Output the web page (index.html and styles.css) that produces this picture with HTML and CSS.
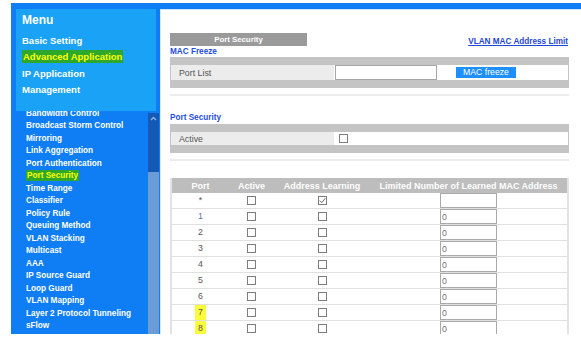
FILE: index.html
```html
<!DOCTYPE html>
<html lang="en">
<head>
  <meta charset="UTF-8">
  <title>Port Security</title>
  <link rel="stylesheet" href="styles.css">
</head>
<body>
  <div class="app">
    <div class="topbar"></div>
    <div class="frame">

      <!-- left navigation -->
      <aside class="sidebar">
        <nav class="menu">
          <div class="menu-title">Menu</div>
          <div class="menu-item">Basic Setting</div>
          <div class="menu-item"><span class="hl">Advanced Application</span></div>
          <div class="menu-item">IP Application</div>
          <div class="menu-item">Management</div>
        </nav>
        <div class="submenu">
          <ul class="sublist">
            <li>Bandwidth Control</li>
            <li>Broadcast Storm Control</li>
            <li>Mirroring</li>
            <li>Link Aggregation</li>
            <li>Port Authentication</li>
            <li><span class="hl">Port Security</span></li>
            <li>Time Range</li>
            <li>Classifier</li>
            <li>Policy Rule</li>
            <li>Queuing Method</li>
            <li>VLAN Stacking</li>
            <li>Multicast</li>
            <li>AAA</li>
            <li>IP Source Guard</li>
            <li>Loop Guard</li>
            <li>VLAN Mapping</li>
            <li>Layer 2 Protocol Tunneling</li>
            <li>sFlow</li>
          </ul>
          <div class="scrollbar">
            <div class="scroll-track">
              <svg width="7" height="5" viewBox="0 0 7 5"><polyline points="1,4 3.5,1.5 6,4" fill="none" stroke="#8db3e2" stroke-width="1.4"/></svg>
            </div>
            <div class="scroll-thumb"></div>
          </div>
        </div>
      </aside>

      <main class="content">
        <div class="head-row">
          <div class="tab">Port Security</div>
          <a class="link">VLAN MAC Address Limit</a>
        </div>

        <div class="section-title first">MAC Freeze</div>
        <div class="panel">
          <div class="panel-row tall">
            <div class="label">Port List</div>
            <div class="value">
              <input class="text-input" type="text">
              <button class="btn">MAC freeze</button>
            </div>
          </div>
        </div>
        <div class="sep"></div>

        <div class="section-title">Port Security</div>
        <div class="panel">
          <div class="panel-row">
            <div class="label">Active</div>
            <div class="value pad"><span class="cb"></span></div>
          </div>
        </div>
        <div class="sep"></div>

        <table class="ports">
          <thead>
            <tr>
              <th class="c-port">Port</th>
              <th class="c-active">Active</th>
              <th class="c-learn">Address Learning</th>
              <th>Limited Number of Learned MAC Address</th>
            </tr>
          </thead>
          <tbody>
            <tr>
              <td>*</td>
              <td><span class="cb"></span></td>
              <td><span class="cb"><svg width="7" height="7" viewBox="0 0 7 7"><polyline points="0.8,3.6 2.8,5.6 6.3,1.2" fill="none" stroke="#666" stroke-width="1"/></svg></span></td>
              <td><input class="num" type="text" value=""></td>
            </tr>
            <tr>
              <td class="first-port">1</td>
              <td><span class="cb"></span></td>
              <td><span class="cb"></span></td>
              <td><input class="num" type="text" value="0"></td>
            </tr>
            <tr>
              <td>2</td>
              <td><span class="cb"></span></td>
              <td><span class="cb"></span></td>
              <td><input class="num" type="text" value="0"></td>
            </tr>
            <tr>
              <td>3</td>
              <td><span class="cb"></span></td>
              <td><span class="cb"></span></td>
              <td><input class="num" type="text" value="0"></td>
            </tr>
            <tr>
              <td>4</td>
              <td><span class="cb"></span></td>
              <td><span class="cb"></span></td>
              <td><input class="num" type="text" value="0"></td>
            </tr>
            <tr>
              <td>5</td>
              <td><span class="cb"></span></td>
              <td><span class="cb"></span></td>
              <td><input class="num" type="text" value="0"></td>
            </tr>
            <tr>
              <td>6</td>
              <td><span class="cb"></span></td>
              <td><span class="cb"></span></td>
              <td><input class="num" type="text" value="0"></td>
            </tr>
            <tr>
              <td><span class="mark">7</span></td>
              <td><span class="cb"></span></td>
              <td><span class="cb"></span></td>
              <td><input class="num" type="text" value="0"></td>
            </tr>
            <tr>
              <td><span class="mark">8</span></td>
              <td><span class="cb"></span></td>
              <td><span class="cb"></span></td>
              <td><input class="num" type="text" value="0"></td>
            </tr>
          </tbody>
        </table>
      </main>
    </div>
  </div>
</body>
</html>
```

FILE: styles.css
```css
* { box-sizing: border-box; margin: 0; padding: 0; }

body {
  font-family: 'Liberation Sans', Arial, sans-serif;
  background: white;
}

.app {
  margin: 3px 0 0 11px;
  height: 331px;
  display: flex;
  flex-direction: column;
  overflow: hidden;
  background: #0f7ef4;
}

.topbar {
  height: 6px;
  flex: none;
}

.frame {
  flex: 1;
  display: flex;
  min-height: 0;
}

/* Sidebar */
.sidebar {
  width: 149px;
  flex: none;
  padding: 0 4px 0 5px;
  display: flex;
  flex-direction: column;
  color: white;
  font-weight: bold;
}

.menu {
  height: 102px;
  flex: none;
  background: #1aa2f6;
  padding: 3px 0 0 6px;
}

.menu-title {
  font-size: 12px;
  line-height: 16px;
  margin-bottom: 5px;
}

.menu-item {
  font-size: 9.5px;
  line-height: 16.4px;
}

.hl {
  background: #2ea82a;
  color: #ffff00;
  padding: 1px 1px;
}

.submenu {
  flex: 1;
  display: flex;
  overflow: hidden;
  margin-right: -3px;
}

.sublist {
  flex: 1;
  list-style: none;
  margin-top: -3.5px;
  padding-left: 10px;
  font-size: 8.2px;
  line-height: 12.5px;
}

.scrollbar {
  width: 11px;
  margin-top: 2px;
  display: flex;
  flex-direction: column;
}

.scroll-track {
  height: 59px;
  background: #1559b4;
  display: flex;
  justify-content: center;
  padding-top: 3px;
}

.scroll-thumb {
  flex: 1;
  background: #6b9cd6;
}

/* Main content */
.content {
  flex: 1;
  background: white;
  border-left: 1px solid #d4e7fa;
  border-top: 1px solid #cfe5fb;
  padding: 23px 12px 0 9px;
  color: #555;
}

.head-row {
  display: flex;
  justify-content: space-between;
  align-items: center;
  height: 13px;
}

.tab {
  width: 137px;
  height: 13px;
  background: #9a9a9a;
  color: white;
  font-weight: bold;
  font-size: 7.8px;
  line-height: 13px;
  text-align: center;
}

.link {
  color: #1d47d4;
  font-weight: bold;
  font-size: 8.2px;
  text-decoration: underline;
  margin-top: 3px;
  margin-right: 1px;
}

.section-title {
  color: #1f4ee0;
  font-weight: bold;
  font-size: 8.2px;
  line-height: 12px;
  margin-top: 16px;
}

.section-title.first {
  margin-top: 0;
  line-height: 11px;
}

.panel {
  background: #c4c4c4;
  padding: 8px 1px;
}

.panel-row {
  display: flex;
  height: 13px;
}

.panel-row.tall {
  height: 15px;
}

.label {
  width: 163px;
  background: #ececec;
  padding-left: 8px;
  font-size: 8.8px;
  display: flex;
  align-items: center;
}

.value {
  flex: 1;
  background: white;
  display: flex;
  align-items: center;
  padding-left: 1px;
}

.value.pad {
  padding-left: 5px;
}

.text-input {
  width: 102px;
  height: 15px;
  border: 1px solid #a6a6a6;
  background: white;
}

.btn {
  margin-left: 19px;
  width: 60px;
  height: 11px;
  background: #1e8fff;
  color: white;
  border: none;
  font-family: inherit;
  font-size: 8.7px;
  line-height: 11px;
}

.sep {
  height: 2px;
  background: #ececec;
  margin-top: 6px;
}

.cb {
  display: inline-block;
  width: 9px;
  height: 9px;
  border: 1px solid #7c7c7c;
  background: white;
  vertical-align: middle;
}

.cb svg {
  display: block;
  margin: 0 auto;
}

/* Port table */
.ports {
  width: 399px;
  margin-top: 17px;
  border-collapse: collapse;
  border-left: 2px solid #e2e2e2;
  border-right: 2px solid #e2e2e2;
  font-size: 8.8px;
}

.ports th {
  background: #bdbdbd;
  color: white;
  font-weight: bold;
  height: 15px;
  padding: 0;
  font-size: 9px;
  white-space: nowrap;
}

.c-port { width: 58px; }
.c-active { width: 45px; }
.c-learn { width: 96px; }

.ports td {
  height: 15px;
  padding: 0;
  text-align: center;
  border-bottom: 1px solid #e0e0e0;
  color: #555;
  line-height: 15px;
}

.ports td.first-port {
  color: #5a6fa8;
}

.num {
  display: block;
  width: 57px;
  height: 15px;
  margin-left: 70px;
  border: 1px solid #a9a9a9;
  background: white;
  font-family: inherit;
  font-size: 8.8px;
  color: #777;
  padding-left: 1px;
}

.mark {
  display: inline-block;
  background: #fbff3a;
  padding: 1px 3px;
  line-height: 13px;
  vertical-align: top;
}
```
